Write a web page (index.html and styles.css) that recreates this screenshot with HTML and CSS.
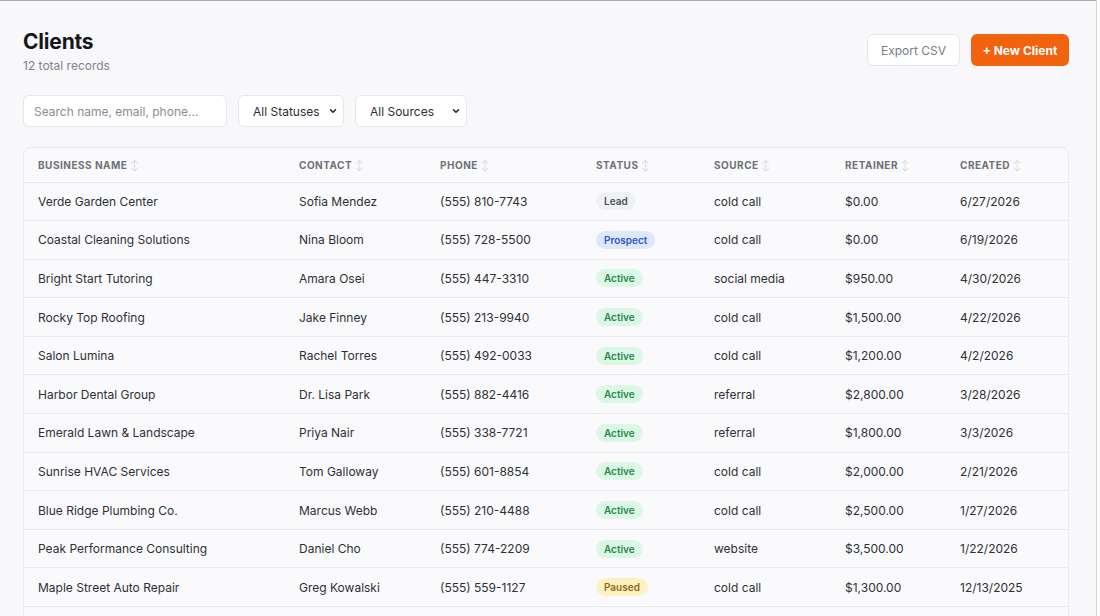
FILE: index.html
```html
<!DOCTYPE html>
<html lang="en">
<head>
  <meta charset="UTF-8">
  <title>Clients</title>
  <link rel="stylesheet" href="styles.css">
</head>
<body>
  <div class="page">
    <div class="header">
      <div>
        <h1>Clients</h1>
        <p class="sub">12 total records</p>
      </div>
      <div class="actions">
        <button class="btn-ghost">Export CSV</button>
        <button class="btn-primary">+ New Client</button>
      </div>
    </div>

    <div class="filters">
      <input class="search" type="text" placeholder="Search name, email, phone...">
      <div class="select sel-status">All Statuses
        <svg width="10" height="10" viewBox="0 0 10 10"><path d="M2.5 3.8 5 6.3 7.5 3.8" fill="none" stroke="#222" stroke-width="1.5" stroke-linecap="round" stroke-linejoin="round"/></svg>
      </div>
      <div class="select sel-source">All Sources
        <svg width="10" height="10" viewBox="0 0 10 10"><path d="M2.5 3.8 5 6.3 7.5 3.8" fill="none" stroke="#222" stroke-width="1.5" stroke-linecap="round" stroke-linejoin="round"/></svg>
      </div>
    </div>

    <div class="card">
      <table>
        <thead>
          <tr>
            <th class="c1">Business Name <span class="sort">↕</span></th>
            <th class="c2">Contact <span class="sort">↕</span></th>
            <th class="c3">Phone <span class="sort">↕</span></th>
            <th class="c4">Status <span class="sort">↕</span></th>
            <th class="c5">Source <span class="sort">↕</span></th>
            <th class="c6">Retainer <span class="sort">↕</span></th>
            <th class="c7">Created <span class="sort">↕</span></th>
          </tr>
        </thead>
        <tbody>
          <tr><td>Verde Garden Center</td><td>Sofia Mendez</td><td>(555) 810-7743</td><td><span class="badge lead">Lead</span></td><td>cold call</td><td>$0.00</td><td>6/27/2026</td></tr>
          <tr><td>Coastal Cleaning Solutions</td><td>Nina Bloom</td><td>(555) 728-5500</td><td><span class="badge prospect">Prospect</span></td><td>cold call</td><td>$0.00</td><td>6/19/2026</td></tr>
          <tr><td>Bright Start Tutoring</td><td>Amara Osei</td><td>(555) 447-3310</td><td><span class="badge active">Active</span></td><td>social media</td><td>$950.00</td><td>4/30/2026</td></tr>
          <tr><td>Rocky Top Roofing</td><td>Jake Finney</td><td>(555) 213-9940</td><td><span class="badge active">Active</span></td><td>cold call</td><td>$1,500.00</td><td>4/22/2026</td></tr>
          <tr><td>Salon Lumina</td><td>Rachel Torres</td><td>(555) 492-0033</td><td><span class="badge active">Active</span></td><td>cold call</td><td>$1,200.00</td><td>4/2/2026</td></tr>
          <tr><td>Harbor Dental Group</td><td>Dr. Lisa Park</td><td>(555) 882-4416</td><td><span class="badge active">Active</span></td><td>referral</td><td>$2,800.00</td><td>3/28/2026</td></tr>
          <tr><td>Emerald Lawn &amp; Landscape</td><td>Priya Nair</td><td>(555) 338-7721</td><td><span class="badge active">Active</span></td><td>referral</td><td>$1,800.00</td><td>3/3/2026</td></tr>
          <tr><td>Sunrise HVAC Services</td><td>Tom Galloway</td><td>(555) 601-8854</td><td><span class="badge active">Active</span></td><td>cold call</td><td>$2,000.00</td><td>2/21/2026</td></tr>
          <tr><td>Blue Ridge Plumbing Co.</td><td>Marcus Webb</td><td>(555) 210-4488</td><td><span class="badge active">Active</span></td><td>cold call</td><td>$2,500.00</td><td>1/27/2026</td></tr>
          <tr><td>Peak Performance Consulting</td><td>Daniel Cho</td><td>(555) 774-2209</td><td><span class="badge active">Active</span></td><td>website</td><td>$3,500.00</td><td>1/22/2026</td></tr>
          <tr><td>Maple Street Auto Repair</td><td>Greg Kowalski</td><td>(555) 559-1127</td><td><span class="badge paused">Paused</span></td><td>cold call</td><td>$1,300.00</td><td>12/13/2025</td></tr>
          <tr class="empty"><td></td><td></td><td></td><td></td><td></td><td></td><td></td></tr>
        </tbody>
      </table>
    </div>
  </div>
</body>
</html>
```

FILE: styles.css
```css
html, body { margin: 0; height: 100%; }
body {
  font-family: Inter, "Noto Sans", sans-serif;
  color: #2a2c33;
  background: #f8f8fb;
  border-top: 1px solid #a9a9ae;
  box-sizing: border-box;
  overflow: hidden;
}
body::after {
  content: "";
  position: fixed;
  top: 0; right: 0; bottom: 0;
  width: 3px;
  background: #fdfdfe;
  border-left: 1px solid #d6d6da;
}
.page { width: 1046px; margin-left: 23px; }

.header { display: flex; justify-content: space-between; align-items: flex-start; padding-top: 29px; }
h1 { margin: 0; font-size: 21px; font-weight: 700; color: #15161a; letter-spacing: -0.2px; line-height: 24px; }
.sub { margin: 4px 0 0; font-size: 12px; color: #80838c; }
.actions { display: flex; gap: 11px; padding-top: 4px; }
button { font-family: inherit; font-size: 12px; height: 32px; border-radius: 6px; cursor: pointer; }
.btn-ghost { width: 93px; background: #fff; border: 1px solid #e6e6eb; color: #7a7d86; }
.btn-primary { width: 98px; background: #f2630f; border: none; color: #fff; font-weight: 700; }

.filters { display: flex; gap: 11px; margin-top: 22px; }
.search, .select {
  height: 32px; box-sizing: border-box;
  background: #fff; border: 1px solid #e6e6eb; border-radius: 6px;
  font-family: inherit; font-size: 12px;
}
.search { width: 204px; padding: 0 10px; color: #333; }
.search::placeholder { color: #8a8d95; }
.select { display: flex; align-items: center; justify-content: space-between; padding: 0 5px 0 14px; color: #2d2f35; }
.sel-status { width: 106px; }
.sel-source { width: 112px; }

.card {
  margin-top: 20px;
  background: #fafafc;
  border: 1px solid #ebebef;
  border-radius: 8px;
  overflow: hidden;
}
table { width: 100%; border-collapse: collapse; table-layout: fixed; font-size: 12px; }
th, td { box-sizing: border-box; }
th {
  text-align: left; height: 34px; padding: 0 0 0 14px;
  font-size: 10px; font-weight: 700; letter-spacing: 0.5px;
  text-transform: uppercase; color: #6d707a;
  border-bottom: 1px solid #ebebef;
  white-space: nowrap;
}
.sort { color: #d2d3d8; font-weight: 300; }
.c1 { width: 261px; } .c2 { width: 141px; } .c3 { width: 156px; }
.c4 { width: 118px; } .c5 { width: 131px; } .c6 { width: 115px; }
td { height: 38.6px; padding: 0 0 0 14px; border-bottom: 1px solid #ebebef; color: #2e3036; white-space: nowrap; }

.badge { display: inline-block; padding: 3px 8px; border-radius: 999px; font-size: 10px; font-weight: 600; line-height: 12px; }
.lead { background: #f0f1f4; color: #4b4f59; }
.prospect { background: #dee8fd; color: #2d56c9; }
.active { background: #dcf7e5; color: #1f8a4b; }
.paused { background: #fdf3c2; color: #946512; }
```
